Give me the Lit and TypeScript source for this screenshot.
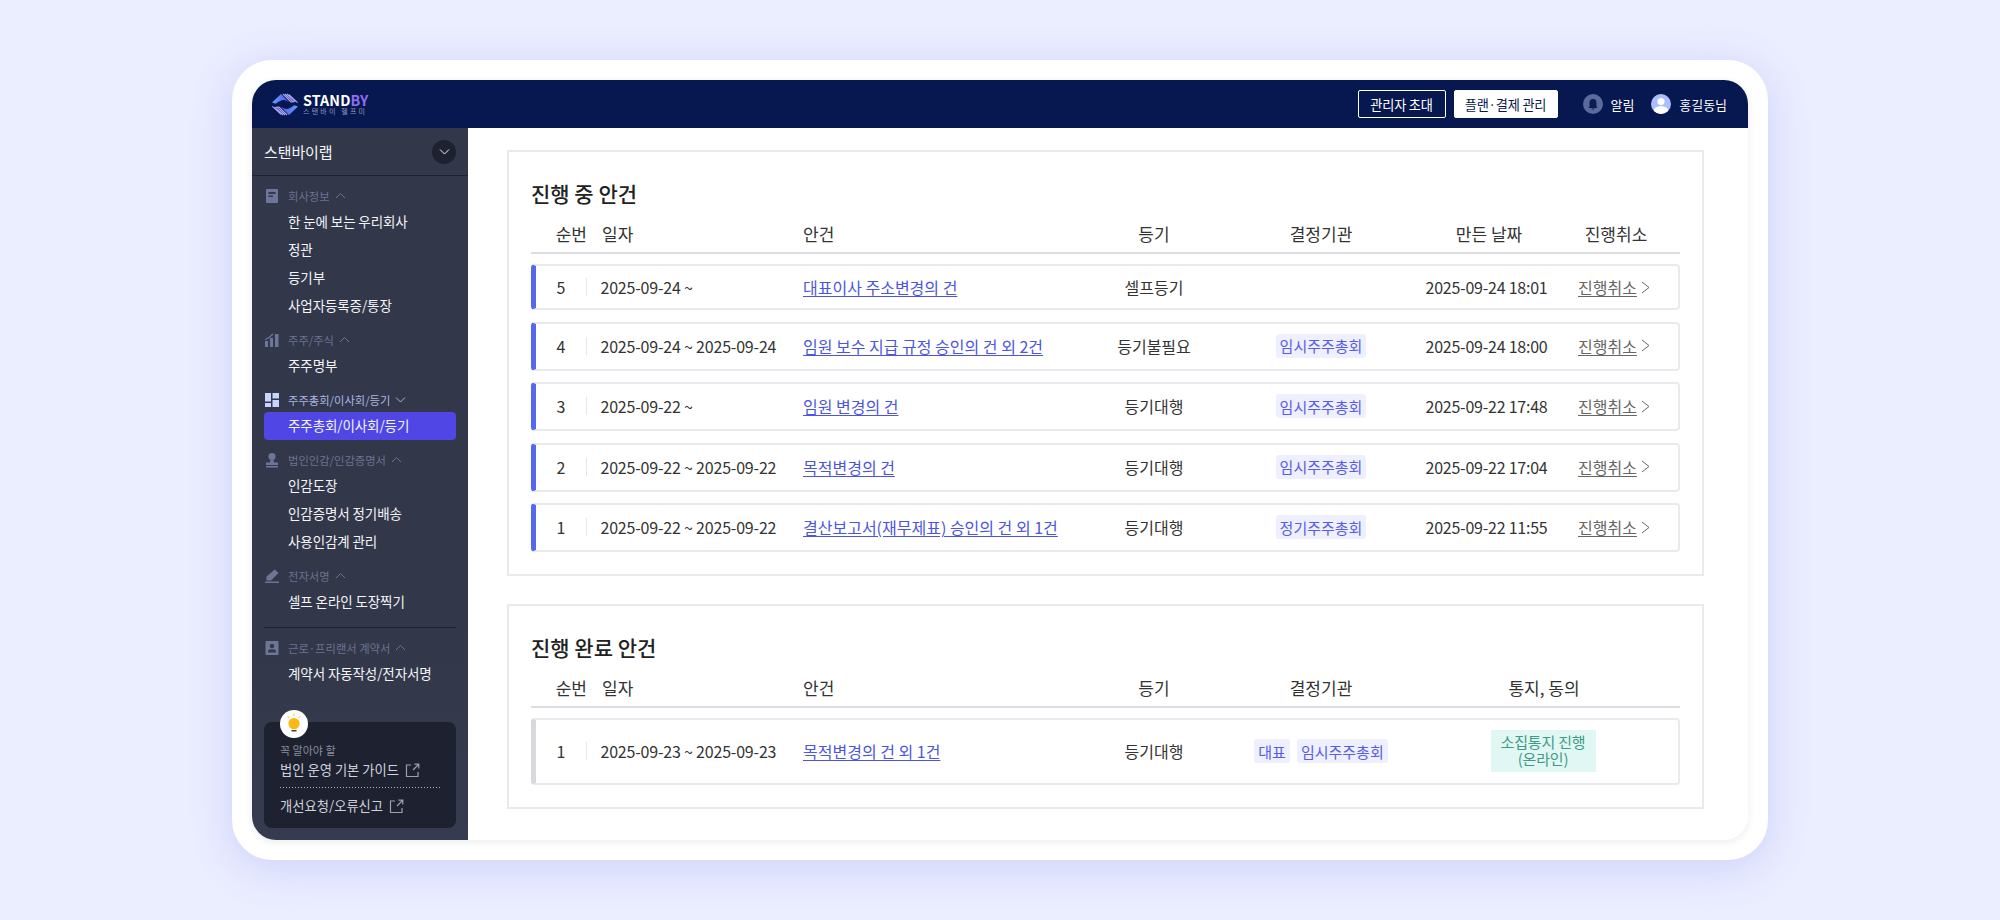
import { LitElement, html, css, svg } from 'lit'
import { customElement } from 'lit/decorators.js'

const chevron = (dir: 'up' | 'down' | 'right') => {
	const d = dir === 'up' ? 'M1 6 L5.5 1.5 L10 6' : dir === 'down' ? 'M1 1.5 L5.5 6 L10 1.5' : 'M1 1 L8 6.5 L1 12'
	const box = dir === 'right' ? '0 0 9 13' : '0 0 11 7.5'
	return html`<svg class=${dir === 'right' ? 'chev-r' : 'chev'} viewBox=${box} fill="none" stroke="currentColor" stroke-width="1"><path d=${d}/></svg>`
}

const external = html`<svg class="ext" viewBox="0 0 15 15" fill="none" stroke="currentColor" stroke-width="1.2">
	<path d="M6 2 H1.5 V13.5 H13 V9"/><path d="M8 7 L13.5 1.5 M9.5 1.2 H13.8 V5.5"/>
</svg>`

const icons: Record<string, unknown> = {
	book: svg`<path d="M3 1 H13 Q14 1 14 2 V14 Q14 15 13 15 H3 Q2 15 2 14 V2 Q2 1 3 1Z M4.5 4 V6 H11.5 V4Z M4.5 7.5 V9 H9 V7.5Z" fill-rule="evenodd"/>`,
	chart: svg`<path d="M1 9 H4 V15 H1Z M6 6 H9 V15 H6Z M11 2 H14.5 V15 H11Z M1 7 Q5 5.5 8.5 1.5 L9.5 2.5 Q6 6.5 1 8.2Z"/>`,
	board: svg`<path d="M1 1 H7 V9.5 H1Z M1 11 H7 V15 H1Z M8.5 1 H15 V6.5 H8.5Z M8.5 8 H15 V15 H8.5Z"/>`,
	stamp: svg`<circle cx="8" cy="4.5" r="3.6"/><path d="M6.8 7 H9.2 L10 10.5 H14 V13 H2 V10.5 H6Z M2 14 H14 V15.5 H2Z"/>`,
	pen: svg`<path d="M10.8 1.5 L14.5 5 L7 12.5 H2.5 V8.5Z M1 13.5 H15 V15 H1Z"/>`,
	contact: svg`<path d="M2.5 1 H13.5 Q14.5 1 14.5 2 V14 Q14.5 15 13.5 15 H2.5 Q1.5 15 1.5 14 V2 Q1.5 1 2.5 1Z M8 3.8 A2.2 2.2 0 1 0 8 8.2 A2.2 2.2 0 1 0 8 3.8Z M4 12.5 H12 V11.3 Q12 9.3 8 9.3 Q4 9.3 4 11.3Z" fill-rule="evenodd"/>`,
}

type Group = { icon: string; label: string; open?: boolean; items: string[] }

const groups: Group[] = [
	{ icon: 'book', label: '회사정보', items: ['한 눈에 보는 우리회사', '정관', '등기부', '사업자등록증/통장'] },
	{ icon: 'chart', label: '주주/주식', items: ['주주명부'] },
	{ icon: 'board', label: '주주총회/이사회/등기', open: true, items: ['주주총회/이사회/등기'] },
	{ icon: 'stamp', label: '법인인감/인감증명서', items: ['인감도장', '인감증명서 정기배송', '사용인감계 관리'] },
	{ icon: 'pen', label: '전자서명', items: ['셀프 온라인 도장찍기'] },
	{ icon: 'contact', label: '근로·프리랜서 계약서', items: ['계약서 자동작성/전자서명'] },
]

const running = [
	{ no: 5, date: '2025-09-24 ~', title: '대표이사 주소변경의 건', reg: '셀프등기', orgs: [], made: '2025-09-24 18:01' },
	{ no: 4, date: '2025-09-24 ~ 2025-09-24', title: '임원 보수 지급 규정 승인의 건 외 2건', reg: '등기불필요', orgs: ['임시주주총회'], made: '2025-09-24 18:00' },
	{ no: 3, date: '2025-09-22 ~', title: '임원 변경의 건', reg: '등기대행', orgs: ['임시주주총회'], made: '2025-09-22 17:48' },
	{ no: 2, date: '2025-09-22 ~ 2025-09-22', title: '목적변경의 건', reg: '등기대행', orgs: ['임시주주총회'], made: '2025-09-22 17:04' },
	{ no: 1, date: '2025-09-22 ~ 2025-09-22', title: '결산보고서(재무제표) 승인의 건 외 1건', reg: '등기대행', orgs: ['정기주주총회'], made: '2025-09-22 11:55' },
]

@customElement('app-root')
export class AppRoot extends LitElement {
	static styles = css`
		:host {
			display: flex;
			align-items: center;
			justify-content: center;
			height: 920px;
			background: #ebeeff;
			font-family: 'Noto Sans CJK KR', 'Noto Sans', sans-serif;
			color: #333;
		}
		.frame {
			width: 1536px;
			height: 800px;
			box-sizing: border-box;
			padding: 20px;
			background: #fff;
			border-radius: 40px;
			box-shadow: 0 8px 44px rgba(90, 90, 225, 0.2);
		}
		.screen {
			height: 760px;
			display: flex;
			flex-direction: column;
			border-radius: 24px;
			overflow: hidden;
			box-shadow: 0 2px 8px rgba(0, 0, 0, 0.08);
		}
		.top {
			flex: none;
			height: 48px;
			background: #07174f;
			display: flex;
			align-items: center;
			padding: 0 21px 0 20px;
			color: #fff;
		}
		.logo {
			display: flex;
			align-items: center;
			gap: 5px;
			margin-right: auto;
		}
		.logo svg {
			width: 26px;
			height: 23px;
		}
		.brand {
			display: flex;
			flex-direction: column;
		}
		.brand b {
			font-size: 14.3px;
			line-height: 14px;
			font-weight: 700;
			letter-spacing: 0.1px;
		}
		.brand b span {
			color: #8d6ff2;
		}
		.brand small {
			font-size: 7px;
			line-height: 9px;
			letter-spacing: 2.2px;
			color: #8f97b8;
		}
		.btn {
			height: 28px;
			box-sizing: border-box;
			border: 1px solid #fff;
			border-radius: 2px;
			display: flex;
			align-items: center;
			justify-content: center;
			font-size: 13.2px;
			letter-spacing: -0.2px;
		}
		.btn.invite {
			width: 88px;
			margin-right: 8px;
		}
		.btn.plan {
			width: 104px;
			margin-right: 25px;
			background: #fff;
			color: #07174f;
		}
		.who {
			display: flex;
			align-items: center;
			gap: 8px;
			font-size: 13px;
			letter-spacing: -0.05px;
		}
		.who + .who {
			margin-left: 17px;
		}
		.who svg {
			width: 20px;
			height: 20px;
		}
		.body {
			flex: 1;
			display: flex;
			min-height: 0;
		}
		.side {
			flex: none;
			width: 216px;
			background: linear-gradient(#323749 70%, #363b50);
			display: flex;
			flex-direction: column;
			color: #f4f5f8;
		}
		.company {
			flex: none;
			height: 47px;
			box-sizing: content-box;
			border-bottom: 1px solid #1e2230;
			display: flex;
			align-items: center;
			justify-content: space-between;
			padding: 0 12px;
			font-size: 15px;
			letter-spacing: -0.1px;
		}
		.toggle {
			width: 24px;
			height: 24px;
			border-radius: 50%;
			background: #1d2130;
			display: flex;
			align-items: center;
			justify-content: center;
		}
		.chev {
			width: 11px;
			height: 7.5px;
			flex: none;
		}
		.nav {
			flex: 1;
			padding: 8.5px 12px 0;
			display: flex;
			flex-direction: column;
			gap: 9px;
		}
		.group-head {
			height: 23px;
			display: flex;
			align-items: center;
			font-size: 11.3px;
			color: #6d7390;
		}
		.group-head svg.ico {
			width: 16px;
			height: 16px;
			margin-right: 8px;
			fill: #6d7698;
			flex: none;
		}
		.group-head .chev {
			margin-left: 5px;
		}
		.group-head.open {
			color: #aab6e6;
		}
		.group-head.open svg.ico {
			fill: #c6d4ff;
		}
		.item {
			height: 28px;
			box-sizing: border-box;
			display: flex;
			align-items: center;
			padding: 0 0 2px 24px;
			font-size: 13.5px;
			letter-spacing: -0.1px;
			border-radius: 4px;
		}
		.item.active {
			background: #4f46e5;
		}
		.rule {
			height: 1px;
			margin-top: 2px;
			background: #1e2230;
		}
		.help {
			position: relative;
			flex: none;
			height: 106px;
			margin: 0 12px 12px;
			box-sizing: border-box;
			padding: 20px 16px 0;
			background: #1d2130;
			border-radius: 8px;
			color: #cfd2da;
			font-size: 13.3px;
		}
		.bulb {
			position: absolute;
			top: -12px;
			left: 16px;
			width: 28px;
			height: 28px;
		}
		.help small {
			display: block;
			font-size: 11px;
			line-height: 17px;
			color: #8b8f9d;
		}
		.help-link {
			display: flex;
			align-items: center;
			gap: 6px;
			line-height: 22px;
		}
		.ext {
			width: 15px;
			height: 15px;
			color: #9da1ad;
		}
		.dots {
			height: 1px;
			background: repeating-linear-gradient(90deg, #b5b8c2 0 1px, transparent 1px 3px);
			margin: 6px 0 7px;
		}
		.main {
			flex: 1;
			min-width: 0;
			background: #fff;
			padding: 22px 44px 0 39px;
			display: flex;
			flex-direction: column;
			gap: 28px;
		}
		.panel {
			border: 2px solid #e9eaed;
			padding: 28px 22px 22px;
		}
		h2 {
			margin: 0;
			height: 28px;
			font-size: 21px;
			line-height: 26px;
			font-weight: 500;
			color: #222;
		}
		.cols,
		.row {
			display: grid;
			align-items: center;
		}
		.cols {
			height: 46px;
			box-sizing: border-box;
			padding-top: 7px;
			border-bottom: 2px solid #dcdde0;
			font-size: 17px;
			color: #333;
			text-align: center;
			grid-template-columns: 56px 216px 271px 160px 174px 162px 92px 1fr;
		}
		.cols.done {
			grid-template-columns: 56px 216px 271px 160px 174px 272px;
		}
		.cols .c-no {
			text-align: right;
		}
		.cols .c-date {
			text-align: left;
			padding-left: 15px;
		}
		.cols .c-title {
			text-align: left;
		}
		.rows {
			margin-top: 10px;
			display: flex;
			flex-direction: column;
			gap: 11.5px;
		}
		.row {
			min-height: 46px;
			box-sizing: border-box;
			padding: 10px 0 11px;
			border: 2px solid #e9eaed;
			border-left: 5px solid #5468f0;
			border-radius: 4px;
			font-size: 16px;
			text-align: center;
			grid-template-columns: 50px 217px 271px 160px 174px 162px 92px 1fr;
		}
		.row.first {
			padding: 0;
		}
		.row.done {
			border-left-color: #d8d9dc;
			grid-template-columns: 50px 217px 271px 160px 174px 1fr;
		}
		.date {
			text-align: left;
			border-left: 1px solid #e6e7ea;
			line-height: 18px;
			padding-left: 13.5px;
			white-space: nowrap;
			letter-spacing: -0.2px;
		}
		.made {
			letter-spacing: -0.24px;
			white-space: nowrap;
			padding-right: 5px;
		}
		.title {
			text-align: left;
			color: #4c55e0;
			text-decoration: underline;
			text-underline-offset: 2px;
			white-space: nowrap;
		}
		.orgs {
			display: flex;
			justify-content: center;
			gap: 7px;
		}
		.badge {
			height: 24px;
			display: flex;
			align-items: center;
			padding: 0 4px;
			border-radius: 3px;
			background: #eef0ff;
			color: #5a5ce6;
			font-size: 15px;
		}
		.cancel {
			display: flex;
			align-items: center;
			justify-content: flex-start;
			gap: 4px;
			padding-left: 8px;
			color: #666;
			white-space: nowrap;
		}
		.cancel u {
			text-underline-offset: 2px;
		}
		.chev-r {
			width: 9px;
			height: 13px;
			flex: none;
		}
		.notice {
			justify-self: center;
			width: 105px;
			height: 42px;
			box-sizing: border-box;
			padding-top: 3px;
			background: #e0f7f3;
			color: #3f9a88;
			font-size: 15px;
			line-height: 17px;
			letter-spacing: -0.2px;
		}
	`

	private logo() {
		const wing = 'M0 9.5 L9 1 L17.5 9.5 Q12.5 5.8 8.5 7.8 Q5.5 9.5 3.8 10.8Z'
		const stripes = 'M11 1 L19 9 H20.5 M13 1 L21 8.6 H22.5 M15 1 L23 8.2 H24 M17 1.6 L25.6 9.6'
		return html`<svg viewBox="0 0 26 23">
			<defs>
				<linearGradient id="wing" x1="0" y1="0" x2="1" y2="0">
					<stop offset="0" stop-color="#5aa2ff" />
					<stop offset="1" stop-color="#5b52f0" />
				</linearGradient>
			</defs>
			<path d=${wing} fill="url(#wing)" />
			<path d=${stripes} fill="none" stroke="#a9a4f5" stroke-width="1.1" />
			<g transform="rotate(180 13 11.5)">
				<path d=${wing} fill="url(#wing)" />
				<path d=${stripes} fill="none" stroke="#a9a4f5" stroke-width="1.1" />
			</g>
		</svg>`
	}

	private renderGroup(g: Group) {
		return html`<div>
			<div class="group-head ${g.open ? 'open' : ''}">
				<svg class="ico" viewBox="0 0 16 16">${icons[g.icon]}</svg>
				${g.label} ${chevron(g.open ? 'down' : 'up')}
			</div>
			${g.items.map((it) => html`<div class="item ${g.open ? 'active' : ''}">${it}</div>`)}
		</div>`
	}

	private renderSide() {
		return html`<aside class="side">
			<div class="company">
				스탠바이랩
				<span class="toggle">${chevron('down')}</span>
			</div>
			<div class="nav">
				${groups.slice(0, 5).map((g) => this.renderGroup(g))}
				<div class="rule"></div>
				${this.renderGroup(groups[5])}
			</div>
			<div class="help">
				<svg class="bulb" viewBox="0 0 28 28">
					<circle cx="14" cy="14" r="14" fill="#fff" />
					<circle cx="14" cy="13.5" r="5.6" fill="#fdb813" />
					<path d="M11.5 17 H16.5 V19 H11.5Z" fill="#fdb813" />
					<path d="M11.5 20 H16.5 V21.5 H11.5Z" fill="#4a4030" />
					<path d="M14 3.5 V6 M7.5 6 L9.5 8 M20.5 6 L18.5 8" stroke="#f4c04a" stroke-width="1" />
				</svg>
				<small>꼭 알아야 할</small>
				<div class="help-link">법인 운영 기본 가이드 ${external}</div>
				<div class="dots"></div>
				<div class="help-link">개선요청/오류신고 ${external}</div>
			</div>
		</aside>`
	}

	private renderRunning() {
		return html`<section class="panel">
			<h2>진행 중 안건</h2>
			<div class="cols">
				<span class="c-no">순번</span><span class="c-date">일자</span><span class="c-title">안건</span>
				<span>등기</span><span>결정기관</span><span>만든 날짜</span><span>진행취소</span>
			</div>
			<div class="rows">
				${running.map(
					(r, i) => html`<div class="row ${i === 0 ? 'first' : ''}">
						<span>${r.no}</span>
						<span class="date">${r.date}</span>
						<span class="title">${r.title}</span>
						<span>${r.reg}</span>
						<span class="orgs">${r.orgs.map((o) => html`<span class="badge">${o}</span>`)}</span>
						<span class="made">${r.made}</span>
						<span class="cancel"><u>진행취소</u>${chevron('right')}</span>
					</div>`,
				)}
			</div>
		</section>`
	}

	private renderDone() {
		return html`<section class="panel">
			<h2>진행 완료 안건</h2>
			<div class="cols done">
				<span class="c-no">순번</span><span class="c-date">일자</span><span class="c-title">안건</span>
				<span>등기</span><span>결정기관</span><span>통지, 동의</span>
			</div>
			<div class="rows">
				<div class="row done">
					<span>1</span>
					<span class="date">2025-09-23 ~ 2025-09-23</span>
					<span class="title">목적변경의 건 외 1건</span>
					<span>등기대행</span>
					<span class="orgs"><span class="badge">대표</span><span class="badge">임시주주총회</span></span>
					<span class="notice">소집통지 진행<br />(온라인)</span>
				</div>
			</div>
		</section>`
	}

	render() {
		return html`<div class="frame">
			<div class="screen">
				<header class="top">
					<div class="logo">
						${this.logo()}
						<div class="brand">
							<b>STAND<span>BY</span></b>
							<small>스탠바이 헬프미</small>
						</div>
					</div>
					<div class="btn invite">관리자 초대</div>
					<div class="btn plan">플랜·결제 관리</div>
					<div class="who">
						<svg viewBox="0 0 20 20">
							<circle cx="10" cy="10" r="10" fill="#5b6a9c" />
							<path d="M10 5 Q13.5 5 13.5 9 V12.5 L14.5 14 H5.5 L6.5 12.5 V9 Q6.5 5 10 5Z M8.7 14.6 H11.3 V15.6 H8.7Z" fill="#0d1c54" />
						</svg>
						알림
					</div>
					<div class="who">
						<svg viewBox="0 0 20 20">
							<defs><clipPath id="av"><circle cx="10" cy="10" r="10" /></clipPath></defs>
							<circle cx="10" cy="10" r="10" fill="#a9bdff" />
							<g clip-path="url(#av)" fill="#fff">
								<circle cx="10" cy="7.5" r="3.6" />
								<ellipse cx="10" cy="17.5" rx="7.5" ry="5.5" />
							</g>
						</svg>
						홍길동님
					</div>
				</header>
				<div class="body">
					${this.renderSide()}
					<main class="main">${this.renderRunning()} ${this.renderDone()}</main>
				</div>
			</div>
		</div>`
	}
}
